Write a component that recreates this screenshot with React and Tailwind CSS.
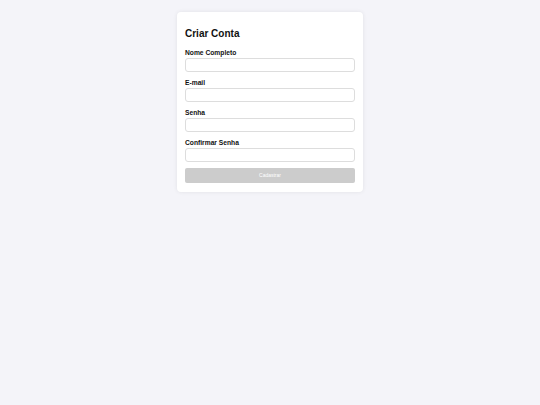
export default function App() {
  const fields = ["Nome Completo", "E-mail", "Senha", "Confirmar Senha"];
  return (
    <div className="min-h-[405px] w-full bg-[#f4f4f9] pt-[12px]" style={{ fontFamily: '"Liberation Sans", Arial, sans-serif' }}>
      <div className="mx-auto w-[186px] rounded-[4px] bg-white px-[8px] pt-[16px] pb-[9px] shadow-[0_0_4px_rgba(0,0,0,0.08)]">
        <h2 className="m-0 text-[10px] leading-[12px] font-bold text-[#111]">Criar Conta</h2>
        <div className="mt-[8px] flex flex-col gap-[6px]">
          {fields.map((f) => (
            <div key={f} className="flex flex-col">
              <label className="text-[6.7px] leading-[9px] font-bold text-[#111]">{f}</label>
              <input type="text" className="mt-[1px] h-[14px] w-full rounded-[3px] border border-[#dddddd] bg-white outline-none" />
            </div>
          ))}
        </div>
        <button className="mt-[6px] flex h-[15px] w-full items-center justify-center rounded-[2px] bg-[#cccccc] text-[5px] text-white">
          Cadastrar
        </button>
      </div>
    </div>
  );
}
